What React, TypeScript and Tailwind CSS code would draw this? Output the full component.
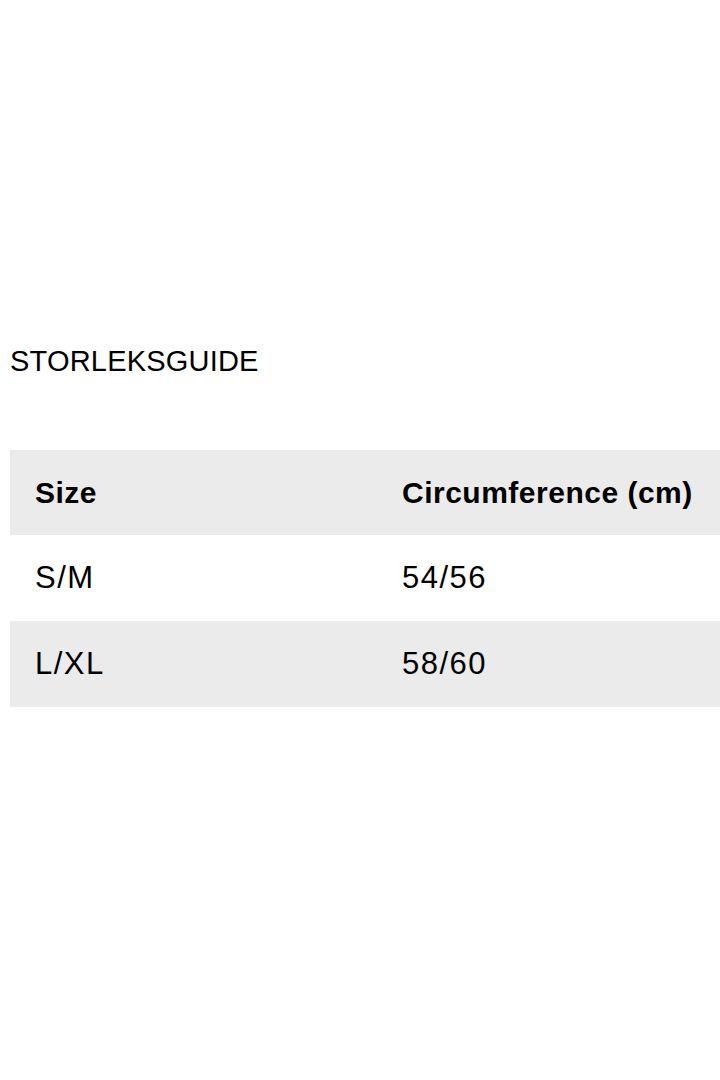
import React from 'react';

const rows = [
  { size: 'S/M', circ: '54/56' },
  { size: 'L/XL', circ: '58/60' },
];

const App: React.FC = () => {
  return (
    <div className="w-[720px] h-[1080px] bg-white overflow-hidden font-['Liberation_Sans',Arial,sans-serif] text-black">
      <div className="pt-[343px] pl-[10px]">
        {/* Titel */}
        <h1 className="text-[29px] leading-[36px] tracking-[0.2px]">STORLEKSGUIDE</h1>

        {/* Tabell */}
        <div className="mt-[71px] w-[710px]">
          <div className="grid grid-cols-[392px_1fr] h-[85px] items-center bg-[#ebebeb] text-[30px] font-bold tracking-[0.5px]">
            <div className="pl-[25px]">Size</div>
            <div>Circumference (cm)</div>
          </div>
          {rows.map((r, i) => (
            <div
              key={r.size}
              className={`grid grid-cols-[392px_1fr] h-[86px] items-center text-[31px] tracking-[1.5px] ${i % 2 === 1 ? 'bg-[#ebebeb]' : 'bg-white'}`}
            >
              <div className="pl-[25px]">{r.size}</div>
              <div>{r.circ}</div>
            </div>
          ))}
        </div>
      </div>
    </div>
  );
};

export default App;
